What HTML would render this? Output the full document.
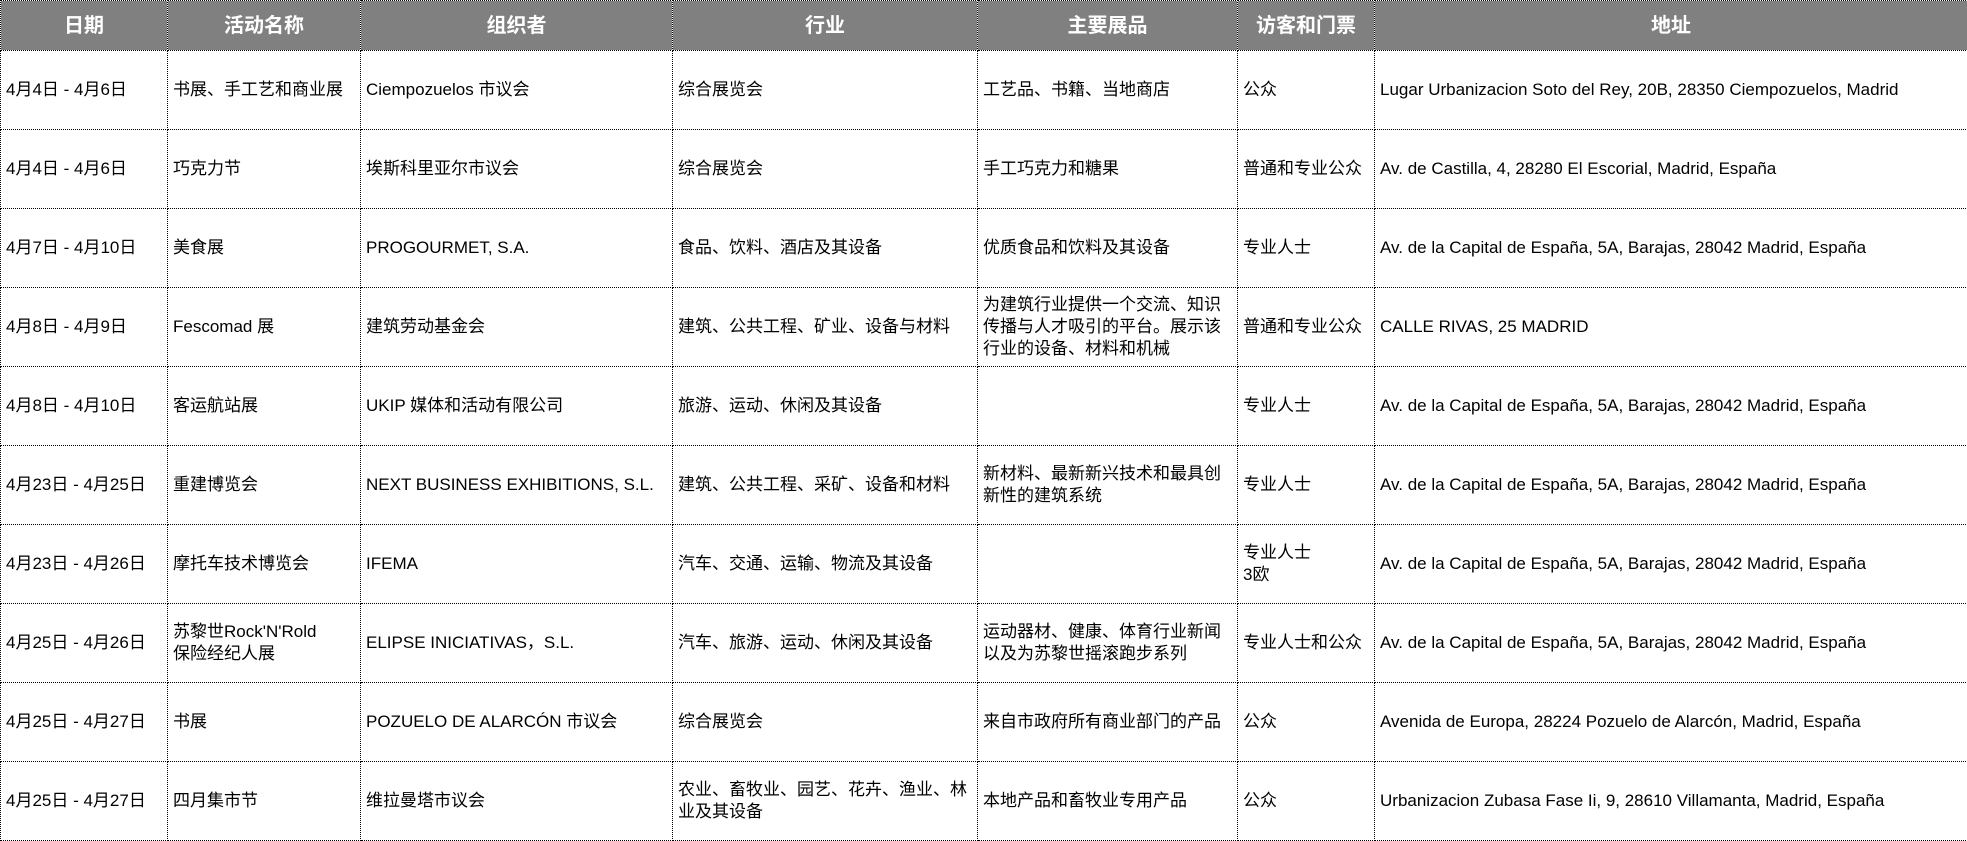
<!DOCTYPE html>
<html><head><meta charset="utf-8"><style>
html,body{margin:0;padding:0;background:#fff;width:1967px;height:841px;overflow:hidden}
table{position:absolute;left:0;top:0;border-collapse:collapse;table-layout:fixed;width:1967px;font-family:"Liberation Sans","Noto Sans CJK SC",sans-serif;font-size:17px;color:#000}
td,th{border:1px dotted #000;padding:0 0 0 5px;vertical-align:middle;line-height:22px;overflow:hidden;white-space:nowrap}
th{background:#808080;color:#fff;font-size:20px;font-weight:bold;height:49px;text-align:center;padding:0}
td{height:78px}
</style></head><body>
<table>
<colgroup><col style="width:167px"><col style="width:193px"><col style="width:312px"><col style="width:305px"><col style="width:260px"><col style="width:137px"><col style="width:593px"></colgroup>
<tr><th>日期</th><th>活动名称</th><th>组织者</th><th>行业</th><th>主要展品</th><th>访客和门票</th><th>地址</th></tr>
<tr><td>4月4日 - 4月6日</td><td>书展、手工艺和商业展</td><td>Ciempozuelos 市议会</td><td>综合展览会</td><td>工艺品、书籍、当地商店</td><td>公众</td><td>Lugar Urbanizacion Soto del Rey, 20B, 28350 Ciempozuelos, Madrid</td></tr>
<tr><td>4月4日 - 4月6日</td><td>巧克力节</td><td>埃斯科里亚尔市议会</td><td>综合展览会</td><td>手工巧克力和糖果</td><td>普通和专业公众</td><td>Av. de Castilla, 4, 28280 El Escorial, Madrid, España</td></tr>
<tr><td>4月7日 - 4月10日</td><td>美食展</td><td>PROGOURMET, S.A.</td><td>食品、饮料、酒店及其设备</td><td>优质食品和饮料及其设备</td><td>专业人士</td><td>Av. de la Capital de España, 5A, Barajas, 28042 Madrid, España</td></tr>
<tr><td>4月8日 - 4月9日</td><td>Fescomad 展</td><td>建筑劳动基金会</td><td>建筑、公共工程、矿业、设备与材料</td><td>为建筑行业提供一个交流、知识<br>传播与人才吸引的平台。展示该<br>行业的设备、材料和机械</td><td>普通和专业公众</td><td>CALLE RIVAS, 25 MADRID</td></tr>
<tr><td>4月8日 - 4月10日</td><td>客运航站展</td><td>UKIP 媒体和活动有限公司</td><td>旅游、运动、休闲及其设备</td><td></td><td>专业人士</td><td>Av. de la Capital de España, 5A, Barajas, 28042 Madrid, España</td></tr>
<tr><td>4月23日 - 4月25日</td><td>重建博览会</td><td>NEXT BUSINESS EXHIBITIONS, S.L.</td><td>建筑、公共工程、采矿、设备和材料</td><td>新材料、最新新兴技术和最具创<br>新性的建筑系统</td><td>专业人士</td><td>Av. de la Capital de España, 5A, Barajas, 28042 Madrid, España</td></tr>
<tr><td>4月23日 - 4月26日</td><td>摩托车技术博览会</td><td>IFEMA</td><td>汽车、交通、运输、物流及其设备</td><td></td><td>专业人士<br>3欧</td><td>Av. de la Capital de España, 5A, Barajas, 28042 Madrid, España</td></tr>
<tr><td>4月25日 - 4月26日</td><td>苏黎世Rock'N'Rold<br>保险经纪人展</td><td>ELIPSE INICIATIVAS，S.L.</td><td>汽车、旅游、运动、休闲及其设备</td><td>运动器材、健康、体育行业新闻<br>以及为苏黎世摇滚跑步系列</td><td>专业人士和公众</td><td>Av. de la Capital de España, 5A, Barajas, 28042 Madrid, España</td></tr>
<tr><td>4月25日 - 4月27日</td><td>书展</td><td>POZUELO DE ALARCÓN 市议会</td><td>综合展览会</td><td>来自市政府所有商业部门的产品</td><td>公众</td><td>Avenida de Europa, 28224 Pozuelo de Alarcón, Madrid, España</td></tr>
<tr><td>4月25日 - 4月27日</td><td>四月集市节</td><td>维拉曼塔市议会</td><td>农业、畜牧业、园艺、花卉、渔业、林<br>业及其设备</td><td>本地产品和畜牧业专用产品</td><td>公众</td><td>Urbanizacion Zubasa Fase Ii, 9, 28610 Villamanta, Madrid, España</td></tr>
</table>
</body></html>
